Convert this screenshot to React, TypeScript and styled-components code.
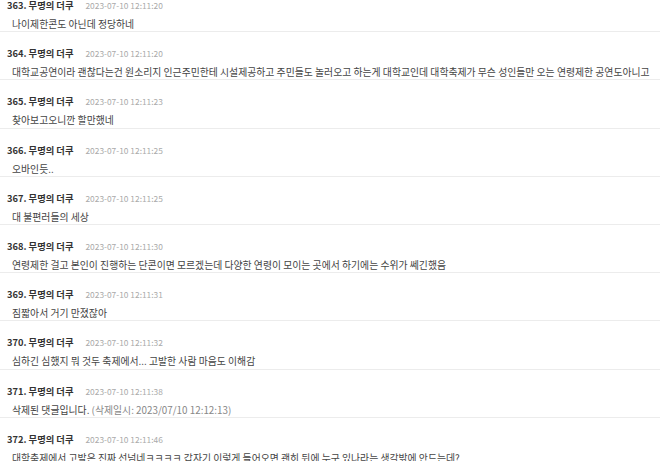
import React from 'react'
import styled, { createGlobalStyle } from 'styled-components'

interface Comment {
    no: number
    date: string
    body: string
    deletedAt?: string
}

const comments: Comment[] = [
    { no: 363, date: '2023-07-10 12:11:20', body: '나이제한콘도 아닌데 정당하네' },
    { no: 364, date: '2023-07-10 12:11:20', body: '대학교공연이라 괜찮다는건 원소리지 인근주민한테 시설제공하고 주민들도 놀러오고 하는게 대학교인데 대학축제가 무슨 성인들만 오는 연령제한 공연도아니고' },
    { no: 365, date: '2023-07-10 12:11:23', body: '찾아보고오니깐 할만했네' },
    { no: 366, date: '2023-07-10 12:11:25', body: '오바인듯..' },
    { no: 367, date: '2023-07-10 12:11:25', body: '대 불편러들의 세상' },
    { no: 368, date: '2023-07-10 12:11:30', body: '연령제한 걸고 본인이 진행하는 단콘이면 모르겠는데 다양한 연령이 모이는 곳에서 하기에는 수위가 쎄긴했음' },
    { no: 369, date: '2023-07-10 12:11:31', body: '짐짧아서 거기 만졌잖아' },
    { no: 370, date: '2023-07-10 12:11:32', body: '심하긴 심했지 뭐 것두 축제에서... 고발한 사람 마음도 이해감' },
    { no: 371, date: '2023-07-10 12:11:38', body: '삭제된 댓글입니다.', deletedAt: '2023/07/10 12:12:13' },
    { no: 372, date: '2023-07-10 12:11:46', body: '대학축제에서 고발은 진짜 선넘네ㅋㅋㅋㅋ 갑자기 이렇게 들어오면 괜히 뒤에 누구 있나라는 생각밖에 안드는데?' },
]

const GlobalStyle = createGlobalStyle`
    html, body {
        margin: 0;
        padding: 0;
        background: #fff;
        overflow: hidden;
    }
    body {
        font-family: "Noto Sans CJK KR", "Noto Sans", sans-serif;
    }
`

const List = styled.div`
    margin-top: -16px;
    display: flex;
    flex-direction: column;
`

const Item = styled.div`
    padding: 14px 0 0.2px 0;
    border-bottom: 1px solid #ececec;
    display: flex;
    flex-direction: column;
    gap: 5px;
`

const Header = styled.div`
    display: flex;
    align-items: center;
    gap: 12px;
    height: 14px;
    padding-left: 7px;
`

const Name = styled.span`
    font-size: 9.3px;
    font-weight: 700;
    color: #333;
    white-space: nowrap;
`

const Date = styled.span`
    font-size: 8.4px;
    color: #aaa;
    white-space: nowrap;
`

const Body = styled.div`
    height: 14px;
    line-height: 14px;
    padding-left: 12px;
    font-size: 9.85px;
    color: #444;
    white-space: nowrap;
`

const Deleted = styled.span`
    color: #888;
`

const App: React.FC = () => {
    return (
        <>
            <GlobalStyle />
            <List>
                {comments.map((c) => (
                    <Item key={c.no}>
                        <Header>
                            <Name>{`${c.no}. 무명의 더쿠`}</Name>
                            <Date>{c.date}</Date>
                        </Header>
                        <Body>
                            {c.body}
                            {c.deletedAt && <Deleted>{` (삭제일시: ${c.deletedAt})`}</Deleted>}
                        </Body>
                    </Item>
                ))}
            </List>
        </>
    )
}

export default App
